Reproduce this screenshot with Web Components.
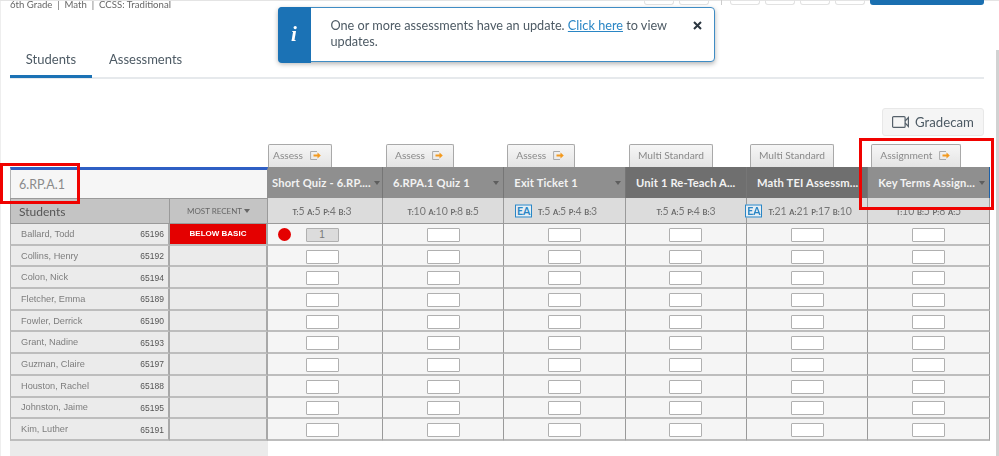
<!DOCTYPE html>
<html><head><meta charset="utf-8"><style>
html,body{margin:0;padding:0;height:456px;overflow:hidden;background:#fff}
body{font-family:Lato,"Liberation Sans",sans-serif;color:#5a6670}
</style></head><body>
<x-app></x-app>
<script>
const ARROW=`<svg width="11" height="11" viewBox="0 0 11 11" style="flex:none"><path d="M7 1.5H.6v8H7" fill="none" stroke="#aaa" stroke-width="1"/><path d="M3.5 4.5h4V2.6L10.8 5.5 7.5 8.4V6.5h-4z" fill="#f39a1f"/></svg>`;
const def=(n,css,html)=>customElements.define(n,class extends HTMLElement{
  connectedCallback(){ if(this.shadowRoot)return; const r=this.attachShadow({mode:'open'});
    const a=k=>this.getAttribute(k)||'';
    r.innerHTML=`<style>${css}</style>`+(typeof html==='function'?html(a,this):html);}
});
def('x-topbar',`:host{display:flex;height:10px;box-sizing:border-box;align-items:flex-start;padding:0 15px 0 10px;border-top:1px solid #e4e4e4}
 .t{font-size:9.6px;line-height:9px;color:#666;white-space:pre;margin-top:-1px}
 .r{margin-left:auto;display:flex;align-items:flex-start;margin-top:-1px;height:5px}
 .b{width:30px;height:5px;border:1px solid #e2e2e2;border-top:0;border-radius:0 0 3px 3px;box-sizing:border-box;margin-left:5px}
 .s{width:1px;height:5px;background:#ccc;margin:0 8px 0 12px}
 .p{width:114px;height:5px;background:#1a6fb0;border-radius:0 0 3px 3px;margin-left:5px}`,
 `<div class="t">6th Grade  |  Math  |  CCSS: Traditional</div><div class="r"><div class="b"></div><div class="b"></div><div class="s"></div><div class="b" style="margin-left:0"></div><div class="b"></div><div class="b"></div><div class="b"></div><div class="p"></div></div>`);
def('x-tabs',`:host{display:block;margin:36px 15px 0 10px;height:31px;border-bottom:2px solid #e6e9ec;font-size:13px}
 .w{display:flex;height:31px}
 .tab{width:82px;box-sizing:border-box;text-align:center;line-height:26px;height:32px;color:#4d5a64}
 .on{border-bottom:3px solid #1b72b5}
 .a{margin-left:17px;width:auto}`,
 `<div class="w"><div class="tab on">Students</div><div class="tab a">Assessments</div></div>`);
def('x-toast',`:host{position:absolute;left:278px;top:7px;width:437px;height:55px;box-sizing:border-box;border:1.5px solid #3f8cc4;border-radius:4px;background:#fff;display:flex;box-shadow:0 2px 5px rgba(0,0,0,.3);font-size:12.7px;line-height:16px;color:#4d5a64}
 .i{width:33px;margin:-1.5px 0 -1.5px -1.5px;flex:none;background:#1b72b5;border-radius:4px 0 0 4px;color:#fff;font:italic bold 21px "Liberation Serif",serif;display:flex;align-items:center;justify-content:center}
 .m{padding:8.5px 0 0 20px;width:340px;flex:none}
 a{color:#2a86c5;text-decoration:underline}
 .x{margin:13px 0 0 auto;padding-right:12px}`,
 `<div class="i">i</div><div class="m">One or more assessments have an update. <a>Click here</a> to view updates.</div><div class="x"><svg width="9" height="9" viewBox="0 0 9 9" style="display:block"><path d="M1 1l7 7M8 1L1 8" stroke="#2b3640" stroke-width="2"/></svg></div>`);
def('x-gradecam',`:host{display:flex;align-items:center;justify-content:center;gap:6px;width:102px;height:28px;box-sizing:border-box;background:#f5f5f5;border:1px solid #e8e8e8;border-radius:3px;font-size:13.2px;color:#4d5a64;margin:29px 15px 0 auto}`,
 `<svg width="17" height="12" viewBox="0 0 17 12"><rect x=".6" y=".6" width="12.5" height="10.8" rx="1" fill="none" stroke="#55606a" stroke-width="1.2"/><path d="M13.1 5L16.4 1.6v8.8L13.1 7" fill="none" stroke="#55606a" stroke-width="1.2"/></svg><span>Gradecam</span>`);
def('x-tag',`:host{display:flex;align-items:center;height:23px;box-sizing:border-box;border:1px solid #a9a9a9;border-bottom:0;border-radius:2px 2px 0 0;background:linear-gradient(#f6f6f6,#e4e4e4);font-size:10.2px;color:#8a8a8a;gap:7px;padding:0 var(--pr,10px) 2px var(--pl,8px)}`,
 (a)=>`<span>${a('label')}</span>${a('arrow')?ARROW:''}`);
def('x-head',`:host{display:flex;align-items:center;justify-content:space-between;background:var(--bg,#8f8f8f);color:#f2f2f2;font-size:11.2px;font-weight:700;letter-spacing:.15px;padding:0 4px 0 var(--pl,10px);box-sizing:border-box;border-right:1px solid var(--bc,#767676);white-space:nowrap;height:31px;overflow:hidden}
 i{width:0;height:0;border:3.5px solid transparent;border-top:4px solid #5e5e5e;border-bottom:0;flex:none;margin-left:3px}`,
 (a)=>`<span>${a('label')}</span>${a('caret')?'<i></i>':''}`);
def('x-stat',`:host{display:flex;align-items:center;justify-content:center;background:#dcdcdc;font-size:10.5px;color:#777;border-right:1px solid #9a9a9a;border-bottom:1px solid #9a9a9a;box-sizing:border-box;white-space:pre;padding:var(--p,0)}
 b{font-size:7.5px;font-weight:700;color:#666}
 .w{position:relative}
 .ea{position:absolute;right:100%;top:50%;transform:translateY(-50%);margin-right:6px;border:1px solid #2a86c5;color:#2a86c5;font-size:10.5px;font-weight:700;width:17px;box-sizing:border-box;text-align:center;line-height:11px;background:#e6eef4}`,
 (a)=>{const ea=a('ea')?`<span class="ea">EA</span>`:'';
   const s=a('v').split(' ').map(p=>{const [k,v]=p.split(':');return `<b>${k}:</b>${v}`}).join(' ');
   return `<span class="w">${ea}${s}</span>`;});
def('x-name',`:host{display:flex;align-items:center;justify-content:space-between;background:#ebebeb;border-right:2px solid #a8a8a8;border-bottom:2px solid #bdbdbd;border-left:1px solid #b5b5b5;box-sizing:border-box;padding:1.5px 4px 0 10px;font:9.2px/1 "Liberation Sans",Arial,sans-serif;color:#7d7d7d}
 span+span{color:#555;font-size:8.5px}`,
 (a)=>`<span>${a('n')}</span><span>${a('id')}</span>`);
def('x-recent',`:host{display:flex;align-items:center;justify-content:center;background:var(--bg,#ebebeb);border-right:2px solid #a8a8a8;border-bottom:2px solid #bdbdbd;box-sizing:border-box;font:bold 8px "Liberation Sans",Arial,sans-serif;color:#fff}`,`<slot></slot>`);
def('x-score',`:host{display:flex;align-items:center;justify-content:center;background:#f5f5f5;border-right:1px solid #9a9a9a;border-bottom:2px solid #bdbdbd;box-sizing:border-box;position:relative}
 .b{width:33px;height:14px;box-sizing:border-box;border:1.5px solid #b0b0b0;border-radius:1px;background:var(--in,#fff);font:10px/11px "Liberation Sans",Arial,sans-serif;color:#777;text-align:center;margin-top:2px}
 .d{position:absolute;left:10px;top:50%;margin-top:-6px;width:13px;height:13px;border-radius:50%;background:#e40000}
 :host([first]) .b{margin-right:6px}`,
 (a)=>`${a('dot')?'<div class="d"></div>':''}<div class="b" style="${a('v')?'--in:#dcdcdc':''}">${a('v')}</div>`);
def('x-mark',`:host{position:absolute;box-sizing:border-box;border:3px solid #f00200;pointer-events:none;display:block}`,``);

const stud=[['Ballard, Todd',65196],['Collins, Henry',65192],['Colon, Nick',65194],['Fletcher, Emma',65189],['Fowler, Derrick',65190],['Grant, Nadine',65193],['Guzman, Claire',65197],['Houston, Rachel',65188],['Johnston, Jaime',65195],['Kim, Luther',65191]];
const cols=[
 {tag:'Assess',arrow:1,h:'Short Quiz - 6.RP....',caret:1,s:'T:5 A:5 P:4 B:3',bg:'#8f8f8f'},
 {tag:'Assess',arrow:1,h:'6.RPA.1 Quiz 1',caret:1,s:'T:10 A:10 P:8 B:5',bg:'#8f8f8f'},
 {tag:'Assess',arrow:1,h:'Exit Ticket 1',caret:1,s:'T:5 A:5 P:4 B:3',ea:1,bg:'#8f8f8f'},
 {tag:'Multi Standard',h:'Unit 1 Re-Teach A...',s:'T:5 A:5 P:4 B:3',bg:'#6f6f6f'},
 {tag:'Multi Standard',h:'Math TEI Assessm...',s:'T:21 A:21 P:17 B:10',ea:1,bg:'#6f6f6f'},
 {tag:'Assignment',arrow:1,h:'Key Terms Assign...',caret:1,s:'T:10 B:5 P:8 A:5',bg:'#8f8f8f'}];
def('x-grid',`:host{display:grid;margin:8px 9px 0 10px;grid-template-columns:160px 98px 115px 121.3px 121.7px 121px 121.3px 121.7px;grid-template-rows:23px 31px 26px repeat(10,21.7px) 16px}
 .sp{grid-column:1/3}
 .tagcell{display:flex;align-items:flex-end;padding-left:3px}
 .tagcell.f{padding-left:0}
 .lbl{grid-column:1/3;background:#f6f6f6;border-top:3px solid #2f5fc4;border-left:1px solid #b5b5b5;border-right:1px solid #8f8f8f;box-sizing:border-box;font-size:12.5px;color:#8a8a8a;padding:0 0 0 8px;display:flex;align-items:center}
 .st{background:#c4c4c4;border:1px solid #9a9a9a;box-sizing:border-box;font-size:12px;color:#555;padding:0 0 0 8px;display:flex;align-items:center}
 .mr{background:#c4c4c4;border-top:1px solid #9a9a9a;border-bottom:1px solid #9a9a9a;border-right:1px solid #9a9a9a;box-sizing:border-box;font-size:8px;color:#666;display:flex;align-items:center;justify-content:center;gap:2px}
 .mr i{width:0;height:0;border:3.5px solid transparent;border-top:4px solid #666;border-bottom:0}
 .foot{grid-column:1/3;background:#ebebeb}`,
 ()=>{
  let h=`<div class="sp"></div>`;
  cols.forEach((c,i)=>h+=`<div class="tagcell ${i?'':'f'}"><x-tag label="${c.tag}" ${c.arrow?'arrow="1"':''} style="${i?'':'--pl:4px;'}${c.arrow?'':'--pr:8px'}"></x-tag></div>`);
  h+=`<div class="lbl">6.RP.A.1</div>`;
  cols.forEach((c,i)=>h+=`<x-head label="${c.h}" style="--bg:${c.bg};${i?'':'--pl:4px;'}${i==5?'--bc:#1b5fa8':''}" ${c.caret?'caret="1"':''}></x-head>`);
  h+=`<div class="st">Students</div><div class="mr">MOST RECENT<i></i></div>`;
  cols.forEach((c,i)=>h+=`<x-stat v="${c.s}" ${c.ea?'ea="1"':''} style="${i?'':'--p:0 6px 0 0'}${c.ea?'--p:0 0 0 6px':''}"></x-stat>`);
  stud.forEach((s,r)=>{
    h+=`<x-name n="${s[0]}" id="${s[1]}"></x-name><x-recent ${r?'':'style="--bg:#e40000"'}>${r?'':'BELOW BASIC'}</x-recent>`;
    cols.forEach((c,i)=>h+=`<x-score ${i?'':'first="1"'} ${(!i&&!r)?'dot="1" v="1"':''}></x-score>`);
  });
  h+=`<div class="foot"></div>`;
  return h;
 });
def('x-scroll',`:host{position:absolute;right:0;top:50px;width:3px;bottom:0;background:#d2d2d2;display:block}`,``);
def('x-app',`:host{display:block;position:relative;width:999px;height:456px;box-sizing:border-box;box-shadow:inset 1px 0 #eee;overflow:hidden;filter:blur(.35px)}`,
 `<x-topbar></x-topbar><x-tabs></x-tabs><x-gradecam></x-gradecam><x-grid></x-grid><x-toast></x-toast>
  <x-mark style="left:0;top:163px;width:80px;height:41px"></x-mark><x-mark style="left:859px;top:138px;width:135px;height:72px"></x-mark><x-scroll></x-scroll>`);
</script>
</body></html>
